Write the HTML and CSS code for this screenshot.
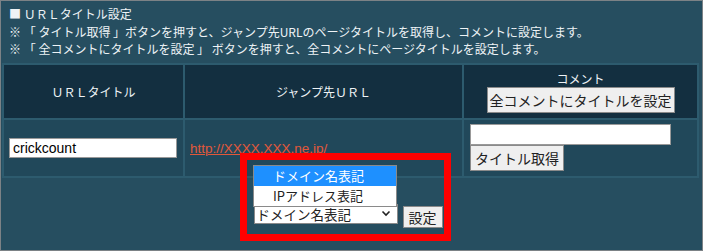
FILE: index.html
```html
<!DOCTYPE html>
<html lang="ja">
<head>
    <meta charset="UTF-8">
    <title>URLタイトル設定</title>
    <link rel="stylesheet" href="styles.css">
</head>
<body>

    <div class="panel">
        <div class="notes">
            <p>■ ＵＲＬタイトル設定</p>
            <p>※ 「 タイトル取得 」ボタンを押すと、ジャンプ先URLのページタイトルを取得し、コメントに設定します。</p>
            <p>※ 「 全コメントにタイトルを設定 」 ボタンを押すと、全コメントにページタイトルを設定します。</p>
        </div>

        <table class="url-table">
            <tr>
                <th class="col-title">ＵＲＬタイトル</th>
                <th class="col-url">ジャンプ先ＵＲＬ</th>
                <th class="col-comment">
                    <div>コメント</div>
                    <button class="btn bulk">全コメントにタイトルを設定</button>
                </th>
            </tr>
            <tr>
                <td><input type="text" class="field title-field" value="crickcount"></td>
                <td><a href="#" class="jump">http://XXXX.XXX.ne.jp/</a></td>
                <td>
                    <input type="text" class="field comment-field">
                    <button class="btn fetch">タイトル取得</button>
                </td>
            </tr>
        </table>

        <div class="mode">
            <div class="select">
                <span>ドメイン名表記</span>
                <svg width="10" height="7" viewBox="0 0 10 7"><path d="M1.5 1.5 L5 5 L8.5 1.5" fill="none" stroke="#222" stroke-width="1.6"/></svg>
            </div>
            <button class="btn apply">設定</button>
        </div>

        <!-- 開いたドロップダウン -->
        <ul class="dropdown">
            <li class="selected">ドメイン名表記</li>
            <li>IPアドレス表記</li>
        </ul>

        <div class="highlight"></div>
    </div>

</body>
</html>
```

FILE: styles.css
```css
body {
    margin: 0;
    font-family: "Noto Sans CJK JP", "Liberation Sans", sans-serif;
}
.panel {
    position: relative;
    width: 703px;
    height: 251px;
    box-sizing: border-box;
    border: 1px solid #7c8286;
    background-color: #264e60;
    color: #eef3f6;
    padding: 4px 1px 0;
}
.notes {
    padding-left: 7px;
    font-size: 12px;
    line-height: 17.5px;
}
.notes p {
    margin: 0;
}
.url-table {
    margin-top: 5px;
    width: 697px;
    border-collapse: separate;
    border-spacing: 2px;
    background-color: #2d5b6e;
    font-size: 12px;
}
.url-table th {
    background-color: #132f40;
    font-weight: normal;
    height: 53px;
    padding: 0;
    line-height: 17px;
}
.col-title {
    width: 179px;
}
.col-url {
    width: 277px;
}
.url-table td {
    background-color: #21485a;
    height: 56px;
    padding: 0 5px;
    vertical-align: middle;
}
.url-table td:last-child {
    padding-left: 6px;
}
.field {
    display: block;
    font-family: "Liberation Sans", Arial, sans-serif;
    font-size: 14px;
    border: 1px solid #999;
    padding: 1px 3px;
    height: 20px;
    box-sizing: border-box;
    margin: 0;
}
.title-field {
    width: 168px;
}
.comment-field {
    width: 201px;
    height: 21px;
}
.jump {
    color: #e2583a;
    font-family: "Liberation Sans", Arial, sans-serif;
    font-size: 13.5px;
}
.btn {
    display: block;
    font-family: "Noto Sans CJK JP", sans-serif;
    font-size: 14px;
    line-height: 18px;
    color: #222;
    background-color: #efefef;
    border: 1px solid #8a8a8a;
    padding: 3px 4px;
    margin: 0;
}
.bulk {
    margin: 0 auto;
    padding: 3px 2px;
}
.apply {
    line-height: 16px;
    padding: 2px 5px;
    margin-top: 2px;
}
.mode {
    display: flex;
    justify-content: center;
    align-items: flex-start;
    gap: 5px;
    margin-top: 26px;
    padding-right: 7px;
}
.select {
    display: flex;
    justify-content: space-between;
    align-items: center;
    width: 144px;
    height: 20px;
    box-sizing: border-box;
    background-color: #fff;
    border: 1px solid #8a8a8a;
    color: #222;
    font-size: 13.5px;
    padding: 0 6px 0 2px;
}
.dropdown {
    position: absolute;
    left: 252px;
    top: 164px;
    width: 142px;
    margin: 0;
    padding: 0;
    list-style: none;
    background-color: #fff;
    border: 1px solid #8a8a8a;
    font-size: 13px;
    color: #222;
}
.dropdown li {
    height: 20px;
    line-height: 20px;
    padding-left: 19px;
}
.dropdown li.selected {
    background-color: #1e90ff;
    color: #fff;
}
.highlight {
    position: absolute;
    left: 239px;
    top: 152px;
    width: 197px;
    height: 74px;
    border: 7px solid #ff0000;
}
```
